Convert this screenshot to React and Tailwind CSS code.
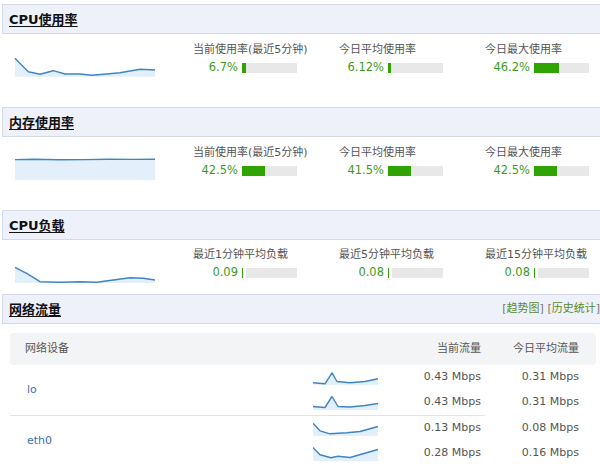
import React from "react";

const FONT = { fontFamily: '"DejaVu Sans", "Noto Sans CJK SC", sans-serif' };

function Header({ title, right }) {
  return (
    <div className="ml-[2px] box-border h-[30px] border-y border-l border-[#d6d9ea] bg-[#eef0fa] flex items-center justify-between pl-[6px]">
      <span className="text-[13px] font-bold text-[#111] underline underline-offset-2 leading-none">{title}</span>
      {right}
    </div>
  );
}

function Spark({ w, h, pts, bottom, className }) {
  const line = pts.map((p, i) => (i ? "L" : "M") + p[0] + " " + p[1]).join(" ");
  const area = line + ` L${pts[pts.length - 1][0]} ${bottom} L${pts[0][0]} ${bottom} Z`;
  return (
    <svg width={w} height={h} viewBox={`0 0 ${w} ${h}`} className={className}>
      <path d={area} fill="#e3effa" />
      <path d={line} fill="none" stroke="#3d85c6" strokeWidth="1.4" strokeLinejoin="round" />
    </svg>
  );
}

function Metric({ label, value, pct, thin }) {
  const fill = thin ? 1 : Math.max(3, Math.round((pct / 100) * 55));
  return (
    <div className="flex flex-col">
      <div className="text-[11px] leading-[14px] text-[#555] whitespace-nowrap">{label}</div>
      <div className="mt-[4px] h-[14px] flex items-center">
        <span className="w-[45px] text-right text-[11.5px] leading-none text-[#3e9b1c]">{value}</span>
        <div className="ml-[4px] w-[55px] h-[10px] bg-[#e8e8e8] flex">
          <div className="h-full bg-[#2fa300]" style={{ width: fill }} />
          {thin && <div className="h-full w-[3px] bg-white" />}
        </div>
      </div>
    </div>
  );
}

function Section({ h, pt, spark, metrics }) {
  return (
    <div className="flex" style={{ height: h }}>
      <div className="w-[193px] shrink-0">{spark}</div>
      {metrics.map((m, i) => (
        <div key={i} className={(i === 2 ? "w-[116px]" : "w-[146px]") + " shrink-0"} style={{ paddingTop: pt }}>
          <Metric {...m} />
        </div>
      ))}
    </div>
  );
}

const cpuPts = [[1, 2.3], [14.3, 15.7], [26, 18.3], [39.3, 14.7], [51, 18], [66, 18], [77.7, 19.3], [92.7, 18], [106, 16.7], [126, 13.3], [141, 14]];
const memPts = [[1, 2.6], [20, 2.3], [45, 2.8], [70, 2.6], [95, 2.3], [120, 2.4], [141, 2.2]];
const loadPts = [[1, 2.3], [12.7, 8.3], [26, 16.7], [46, 17.3], [66, 16.7], [82.7, 17.3], [99.3, 15], [116, 12.7], [129.3, 13.3], [141, 15]];

const lo1 = [[0, 12.8], [12, 13.8], [19, 2.8], [24, 11.5], [37, 12.8], [52, 11.5], [65, 8.8]];
const lo2 = [[0, 11.5], [12, 12.5], [19, 1.5], [25, 11.5], [37, 12], [52, 10.5], [65, 8.5]];
const e1 = [[0, 2.2], [7, 9.8], [17, 12.8], [34, 11.8], [47, 10.5], [65, 5.5]];
const e2 = [[0, 1.5], [7, 8.8], [18, 11.8], [25, 10.2], [37, 11.5], [65, 3.5]];

function NetGroup({ name, rows }) {
  return (
    <div className="flex">
      <div className="w-[475px] shrink-0 flex border-b border-[#dfe4ea]">
        <div className="w-[303px] shrink-0 flex items-center pl-[17px] text-[11px] text-[#3a70b5]">{name}</div>
        <div className="flex flex-col">
          {rows.map((r, i) => (
            <div key={i} className="h-[25px] flex items-center">
              <Spark w={66} h={16} pts={r.pts} bottom={15} className="shrink-0" />
              <span className="w-[102px] text-right text-[11px] text-[#555]">{r.cur}</span>
            </div>
          ))}
        </div>
      </div>
      <div className="flex flex-col">
        {rows.map((r, i) => (
          <div key={i} className="h-[25px] w-[94px] flex items-center justify-end text-[11px] text-[#555]">{r.avg}</div>
        ))}
      </div>
    </div>
  );
}

export default function App() {
  return (
    <div className="w-[600px] h-[466px] overflow-hidden bg-white pt-[4px]" style={FONT}>
      <Header title="CPU使用率" />
      <Section
        h={73}
        pt={9}
        spark={<Spark w={141} h={22} pts={cpuPts} bottom={20.7} className="ml-[14px] mt-[22px]" />}
        metrics={[
          { label: "当前使用率(最近5分钟)", value: "6.7%", pct: 6.7 },
          { label: "今日平均使用率", value: "6.12%", pct: 6.12 },
          { label: "今日最大使用率", value: "46.2%", pct: 46.2 },
        ]}
      />
      <Header title="内存使用率" />
      <Section
        h={73}
        pt={9}
        spark={<Spark w={141} h={24} pts={memPts} bottom={23} className="ml-[14px] mt-[20px]" />}
        metrics={[
          { label: "当前使用率(最近5分钟)", value: "42.5%", pct: 42.5 },
          { label: "今日平均使用率", value: "41.5%", pct: 41.5 },
          { label: "今日最大使用率", value: "42.5%", pct: 42.5 },
        ]}
      />
      <Header title="CPU负载" />
      <Section
        h={54}
        pt={8}
        spark={<Spark w={141} h={19} pts={loadPts} bottom={18} className="ml-[14px] mt-[25px]" />}
        metrics={[
          { label: "最近1分钟平均负载", value: "0.09", thin: true },
          { label: "最近5分钟平均负载", value: "0.08", thin: true },
          { label: "最近15分钟平均负载", value: "0.08", thin: true },
        ]}
      />
      <Header
        title="网络流量"
        right={
          <span className="text-[11px] text-[#777] whitespace-nowrap">
            [<span className="text-[#5a8a28]">趋势图</span>] [<span className="text-[#5a8a28]">历史统计</span>]
          </span>
        }
      />
      <div className="ml-[10px] mr-[4px] mt-[9px]">
        <div className="h-[32px] rounded-[4px] bg-[#f3f4f6] flex items-center text-[11px] text-[#555]">
          <span className="pl-[15px] w-[400px]">网络设备</span>
          <span className="w-[71px] text-right">当前流量</span>
          <span className="w-[98px] text-right">今日平均流量</span>
        </div>
        <NetGroup
          name="lo"
          rows={[
            { pts: lo1, cur: "0.43 Mbps", avg: "0.31 Mbps" },
            { pts: lo2, cur: "0.43 Mbps", avg: "0.31 Mbps" },
          ]}
        />
        <NetGroup
          name="eth0"
          rows={[
            { pts: e1, cur: "0.13 Mbps", avg: "0.08 Mbps" },
            { pts: e2, cur: "0.28 Mbps", avg: "0.16 Mbps" },
          ]}
        />
      </div>
    </div>
  );
}
